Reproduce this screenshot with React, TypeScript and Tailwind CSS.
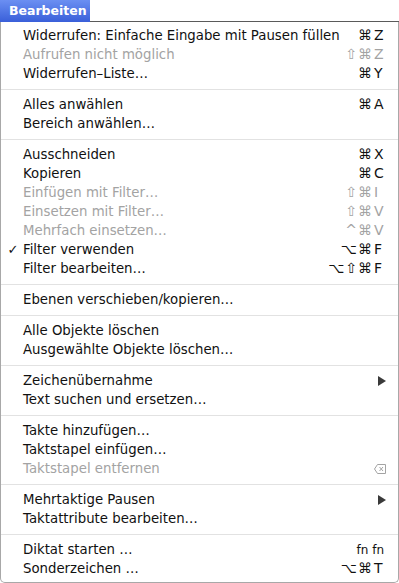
type Item = {
  label: string;
  mods?: string;
  keyChar?: string;
  disabled?: boolean;
  checked?: boolean;
  submenu?: boolean;
  special?: 'fn' | 'del';
};

const groups: Item[][] = [
  [
    { label: 'Widerrufen: Einfache Eingabe mit Pausen füllen', mods: '⌘', keyChar: 'Z' },
    { label: 'Aufrufen nicht möglich', mods: '⇧⌘', keyChar: 'Z', disabled: true },
    { label: 'Widerrufen–Liste…', mods: '⌘', keyChar: 'Y' },
  ],
  [
    { label: 'Alles anwählen', mods: '⌘', keyChar: 'A' },
    { label: 'Bereich anwählen…' },
  ],
  [
    { label: 'Ausschneiden', mods: '⌘', keyChar: 'X' },
    { label: 'Kopieren', mods: '⌘', keyChar: 'C' },
    { label: 'Einfügen mit Filter…', mods: '⇧⌘', keyChar: 'I', disabled: true },
    { label: 'Einsetzen mit Filter…', mods: '⇧⌘', keyChar: 'V', disabled: true },
    { label: 'Mehrfach einsetzen…', mods: '^⌘', keyChar: 'V', disabled: true },
    { label: 'Filter verwenden', mods: '⌥⌘', keyChar: 'F', checked: true },
    { label: 'Filter bearbeiten…', mods: '⌥⇧⌘', keyChar: 'F' },
  ],
  [{ label: 'Ebenen verschieben/kopieren…' }],
  [
    { label: 'Alle Objekte löschen' },
    { label: 'Ausgewählte Objekte löschen…' },
  ],
  [
    { label: 'Zeichenübernahme', submenu: true },
    { label: 'Text suchen und ersetzen…' },
  ],
  [
    { label: 'Takte hinzufügen…' },
    { label: 'Taktstapel einfügen…' },
    { label: 'Taktstapel entfernen', disabled: true, special: 'del' },
  ],
  [
    { label: 'Mehrtaktige Pausen', submenu: true },
    { label: 'Taktattribute bearbeiten…' },
  ],
  [
    { label: 'Diktat starten …', special: 'fn' },
    { label: 'Sonderzeichen …', mods: '⌥⌘', keyChar: 'T' },
  ],
];

const MenuRow = ({ item }: { item: Item }) => {
  const color = item.disabled ? 'text-[#a3a3a3]' : 'text-[#111]';
  return (
    <div className={`flex items-center h-[19px] ${color}`}>
      <div className="w-[22px] shrink-0 flex justify-center pl-[2px] text-[13px]">
        {item.checked ? '✓' : ''}
      </div>
      <div className="flex-1 whitespace-nowrap">{item.label}</div>
      {item.mods && (
        <div className="flex items-center pr-[11px] text-[14px]">
          <span className="tracking-[1px] text-right">{item.mods}</span>
          <span className="w-[13px] ml-[1px]">{item.keyChar}</span>
        </div>
      )}
      {item.special === 'fn' && (
        <div className="pr-[14px] text-[12px]">fn fn</div>
      )}
      {item.special === 'del' && (
        <div className="pr-[12px] flex items-center">
          <svg width="12" height="10" viewBox="0 0 12 10" fill="none" stroke="#a3a3a3" strokeWidth="1">
            <path d="M3.5 0.5 H11.5 V9.5 H3.5 L0.5 5 Z" />
            <path d="M5.5 3 L9 7 M9 3 L5.5 7" />
          </svg>
        </div>
      )}
      {item.submenu && (
        <div className="pr-[12px] flex items-center">
          <svg width="8" height="10" viewBox="0 0 8 10">
            <path d="M0 0 L8 5 L0 10 Z" fill="#3a3a3a" />
          </svg>
        </div>
      )}
    </div>
  );
};

export default function App() {
  return (
    <div className="w-[399px] h-[583px] bg-white overflow-hidden font-['DejaVu_Sans',sans-serif] text-[13.3px]">
      <div className="h-[22px] flex bg-white border-b border-[#5a5a5a]">
        <div className="w-[90px] h-[22px] bg-gradient-to-b from-[#6b8ff2] to-[#3a5fd9] text-white font-bold text-[12.5px] pl-[9px] flex items-center">
          Bearbeiten
        </div>
      </div>
      <div className="h-[561px] bg-white border-l border-r border-b border-[#a8a8a8] rounded-b-[5px] pt-[4px]">
        {groups.map((g, gi) => (
          <div key={gi}>
            {gi > 0 && (
              <div className="h-[12px] flex items-center">
                <div className="h-px w-full bg-[#e2e2e2]" />
              </div>
            )}
            {g.map((it, i) => (
              <MenuRow key={i} item={it} />
            ))}
          </div>
        ))}
      </div>
    </div>
  );
}
